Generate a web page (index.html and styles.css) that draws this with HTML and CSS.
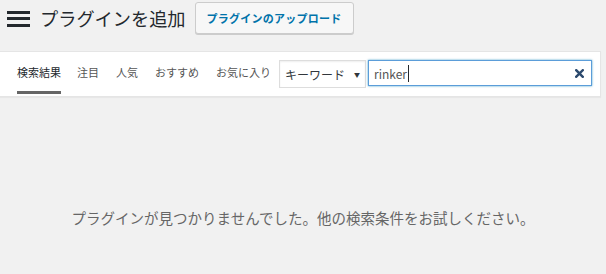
FILE: index.html
```html
<!DOCTYPE html>
<html lang="ja">
<head>
    <meta charset="UTF-8">
    <meta name="viewport" content="width=device-width, initial-scale=1.0">
    <title>プラグインを追加</title>
    <link rel="stylesheet" href="styles.css">
</head>
<body>
    <header class="page-header">
        <span class="menu-icon"><i></i><i></i><i></i></span>
        <h1>プラグインを追加</h1>
        <button class="upload-btn">プラグインのアップロード</button>
    </header>

    <div class="filter-bar">
        <ul class="filter-links">
            <li class="current">検索結果</li>
            <li>注目</li>
            <li>人気</li>
            <li>おすすめ</li>
            <li>お気に入り</li>
        </ul>
        <div class="search-form">
            <div class="search-type">キーワード <span class="arrow">▼</span></div>
            <div class="search-box">
                <span class="query">rinker</span><span class="caret"></span>
                <svg class="clear" width="9" height="9" viewBox="0 0 9 9">
                    <path d="M1.2 1.2 L7.8 7.8 M7.8 1.2 L1.2 7.8" stroke="#2c4a6e" stroke-width="2.4" stroke-linecap="square"/>
                </svg>
            </div>
        </div>
    </div>

    <p class="no-results">プラグインが見つかりませんでした。他の検索条件をお試しください。</p>
</body>
</html>
```

FILE: styles.css
```css
body {
    margin: 0;
    background-color: #f1f1f1;
    font-family: "Noto Sans CJK JP", "Noto Sans", sans-serif;
    color: #23282d;
}
.page-header {
    display: flex;
    align-items: center;
    height: 36px;
    padding-left: 7px;
}
.menu-icon {
    display: flex;
    flex-direction: column;
    justify-content: space-between;
    width: 23px;
    height: 16px;
    margin-top: 1px;
}
.menu-icon i {
    display: block;
    height: 3px;
    background-color: #23282d;
}
h1 {
    margin: 0 0 0 10px;
    font-size: 18.2px;
    font-weight: 400;
    line-height: 1;
}
.upload-btn {
    margin-left: 9px;
    height: 32px;
    padding: 0 11px;
    font-family: inherit;
    font-size: 11px;
    font-weight: 700;
    letter-spacing: 0.25px;
    color: #0073aa;
    background-color: #f7f7f7;
    border: 1px solid #ccc;
    border-radius: 3px;
    box-shadow: 0 1px 0 #ccc;
}
.filter-bar {
    display: flex;
    align-items: stretch;
    margin: 15px 5px 0 0;
    height: 44px;
    padding-left: 17px;
    background-color: #fff;
    border: 1px solid #e5e5e5;
    border-left: none;
    box-shadow: 0 1px 1px rgba(0, 0, 0, 0.04);
}
.filter-links {
    display: flex;
    list-style: none;
    margin: 0;
    padding: 0;
}
.filter-links li {
    height: 39px;
    margin-right: 17px;
    padding-top: 12px;
    box-sizing: border-box;
    font-size: 11px;
    line-height: 16px;
    color: #555;
}
.filter-links li.current {
    height: 42px;
    margin-right: 16px;
    color: #23282d;
    border-bottom: 3px solid #666;
}
.filter-links li:last-child {
    margin-right: 8px;
}
.search-form {
    display: flex;
    align-items: flex-start;
    margin-top: 8px;
}
.search-type {
    display: flex;
    align-items: center;
    width: 87px;
    height: 28px;
    box-sizing: border-box;
    padding-left: 5px;
    font-size: 12px;
    color: #32373c;
    background-color: #fff;
    border: 1px solid #ddd;
    box-shadow: inset 0 1px 2px rgba(0, 0, 0, 0.07);
}
.arrow {
    margin-left: 9px;
    font-size: 6px;
}
.search-box {
    display: flex;
    align-items: center;
    width: 224px;
    height: 26px;
    box-sizing: border-box;
    margin-left: 2px;
    padding-left: 5px;
    font-size: 12px;
    color: #555;
    background-color: #fff;
    border: 1px solid #5b9dd9;
    box-shadow: 0 0 2px rgba(30, 140, 190, 0.8);
}
.caret {
    width: 1px;
    height: 17px;
    margin-left: 1px;
    background-color: #23282d;
}
.clear {
    margin-left: auto;
    margin-right: 7px;
}
.no-results {
    margin: 110px 0 0;
    text-align: center;
    font-size: 14.5px;
    color: #666;
}
```
